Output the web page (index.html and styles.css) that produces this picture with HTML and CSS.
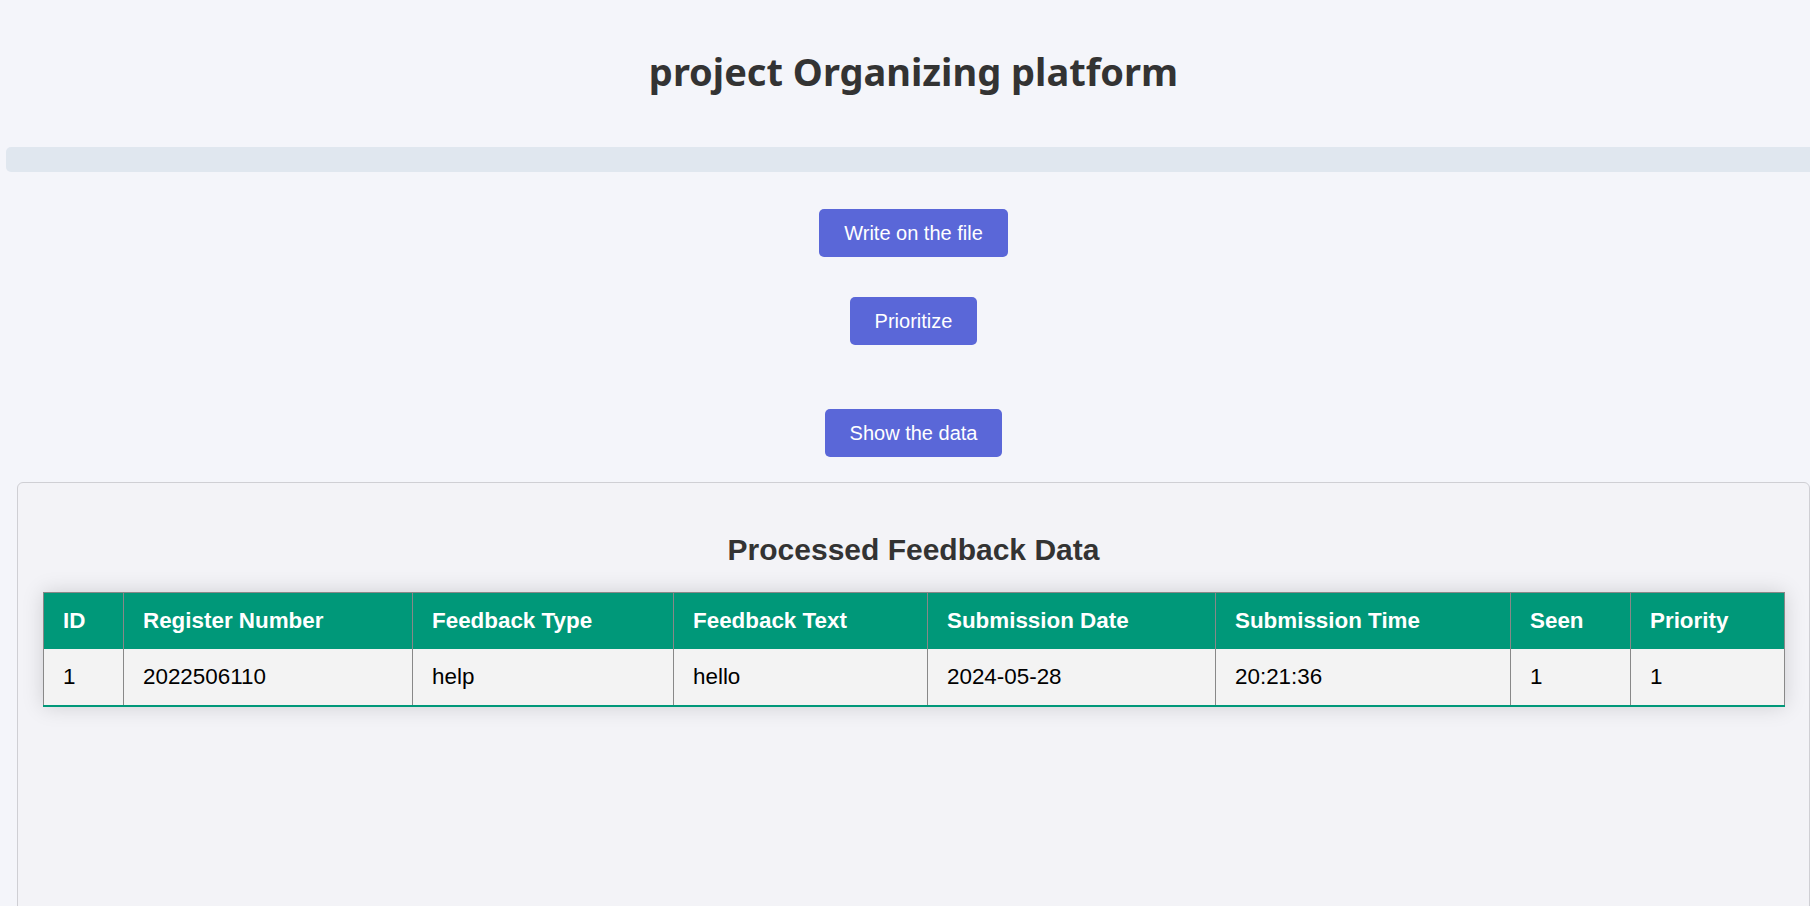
FILE: index.html
```html
<!DOCTYPE html>
<html lang="en">
<head>
<meta charset="utf-8">
<title>project Organizing platform</title>
<link rel="stylesheet" href="styles.css">
</head>
<body>
  <header class="page-header">
    <h1 class="page-title">project Organizing platform</h1>
  </header>
  <div class="progress-bar"></div>
  <main class="actions">
    <form class="action-form"><button type="button" class="btn">Write on the file</button></form>
    <form class="action-form"><button type="button" class="btn">Prioritize</button></form>
    <form class="action-form action-form--show"><button type="button" class="btn">Show the data</button></form>
  </main>
  <section class="panel">
    <h2 class="panel-title">Processed Feedback Data</h2>
    <table class="styled-table">
      <colgroup>
        <col class="c-id"><col class="c-reg"><col class="c-type"><col class="c-text">
        <col class="c-date"><col class="c-time"><col class="c-seen"><col class="c-prio">
      </colgroup>
      <thead>
        <tr>
          <th>ID</th>
          <th>Register Number</th>
          <th>Feedback Type</th>
          <th>Feedback Text</th>
          <th>Submission Date</th>
          <th>Submission Time</th>
          <th>Seen</th>
          <th>Priority</th>
        </tr>
      </thead>
      <tbody>
        <tr>
          <td>1</td>
          <td>2022506110</td>
          <td>help</td>
          <td>hello</td>
          <td>2024-05-28</td>
          <td>20:21:36</td>
          <td>1</td>
          <td>1</td>
        </tr>
      </tbody>
    </table>
  </section>
</body>
</html>
```

FILE: styles.css
```css
html, body {
  margin: 0;
  padding: 0;
}
body {
  background: #f4f5fa;
  font-family: "Liberation Sans", Arial, sans-serif;
  color: #333;
  overflow: hidden;
}
.page-header {
  padding-top: 47px;
  padding-left: 17px;
}
.page-title {
  margin: 0;
  text-align: center;
  font-family: "Noto Sans", "Open Sans", sans-serif;
  font-weight: 700;
  font-size: 38px;
  line-height: 48px;
  color: #333;
}
.progress-bar {
  margin: 52px 0 0 6px;
  height: 25px;
  background: #e0e7ef;
  border-radius: 5px 0 0 5px;
}
.actions {
  display: flex;
  flex-direction: column;
  align-items: center;
  padding-top: 37px;
  padding-left: 17px;
}
.action-form {
  margin: 0 0 40px;
}
.action-form--show {
  margin-top: 24px;
  margin-bottom: 0;
}
.btn {
  display: block;
  font-family: "Liberation Sans", Arial, sans-serif;
  font-size: 20px;
  line-height: 24px;
  padding: 12px 25px;
  border: none;
  border-radius: 5px;
  background: #5a67d8;
  color: #fff;
}
.panel {
  margin: 25px 0 0 17px;
  border: 1px solid #cfcfd4;
  border-radius: 6px;
  background: #f3f3f7;
  padding: 25px;
  min-height: 500px;
}
.panel-title {
  margin: 24px 0 24px;
  text-align: center;
  font-family: "Liberation Sans", Arial, sans-serif;
  font-size: 30px;
  line-height: 36px;
  font-weight: 700;
  color: #333;
}
.styled-table {
  width: 100%;
  border-collapse: collapse;
  table-layout: fixed;
  box-shadow: 0 0 20px rgba(0, 0, 0, 0.15);
  font-size: 22.4px;
  line-height: 24px;
}
.c-id { width: 80px; }
.c-reg { width: 289px; }
.c-type { width: 261px; }
.c-text { width: 254px; }
.c-date { width: 288px; }
.c-time { width: 295px; }
.c-seen { width: 120px; }
.c-prio { width: 154px; }
.styled-table th,
.styled-table td {
  padding: 16px 19px;
  text-align: left;
  border-left: 1px solid #888;
  border-right: 1px solid #888;
}
.styled-table thead tr {
  background: #009879;
  color: #fff;
  border-top: 1px solid #888;
}
.styled-table th {
  font-weight: 700;
}
.styled-table tbody tr {
  background: #f3f3f3;
  color: #000;
  border-bottom: 2px solid #009879;
}
```
